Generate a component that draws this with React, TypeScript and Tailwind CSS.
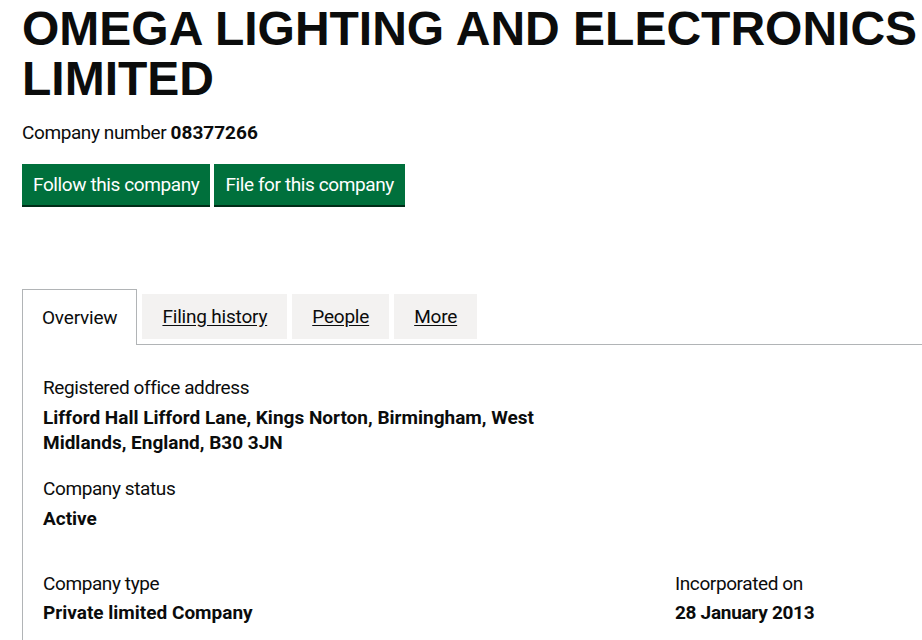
const tabs = ["Filing history", "People", "More"];

const App = () => {
  return (
    <div className="w-[922px] h-[640px] overflow-hidden bg-white text-[#0b0c0c] font-['Roboto',sans-serif] tracking-[-0.4px]">
      <div className="pl-[22px] w-[1400px]">
        <h1 className="pt-[4px] text-[48px] leading-[50px] font-bold tracking-normal font-['Liberation_Sans',Arial,sans-serif]">
          OMEGA LIGHTING AND ELECTRONICS
          <br />
          LIMITED
        </h1>
        <p className="mt-[16px] text-[19px] leading-[25px]">
          Company number <strong className="font-bold tracking-normal">08377266</strong>
        </p>

        <div className="mt-[19px] flex gap-[4px]">
          <button className="bg-[#00703c] text-white text-[19px] leading-[25px] px-[11px] py-[8px] shadow-[0_2px_0_#002d18]">
            Follow this company
          </button>
          <button className="bg-[#00703c] text-white text-[19px] leading-[25px] px-[11px] py-[8px] shadow-[0_2px_0_#002d18]">
            File for this company
          </button>
        </div>

        {/* Tabs */}
        <div className="mt-[84px] flex items-end border-b border-[#b1b4b6] tracking-[-0.2px]">
          <div className="-mb-px h-[56px] border border-b-0 border-[#b1b4b6] bg-white px-[19px] pt-[15px] text-[19px] leading-[25px]">
            Overview
          </div>
          {tabs.map((t) => (
            <a
              key={t}
              href="#"
              className="ml-[5px] mb-[5px] h-[45px] bg-[#f3f2f1] px-[20px] pt-[10px] text-[19px] leading-[25px] underline underline-offset-2"
            >
              {t}
            </a>
          ))}
        </div>

        <div className="border-l border-[#b1b4b6] px-[20px] pt-[30px] pb-[30px] text-[19px] leading-[25px]">
          <dl>
            <dt>Registered office address</dt>
            <dd className="mt-[5px] font-bold tracking-normal w-[500px]">
              Lifford Hall Lifford Lane, Kings Norton, Birmingham, West Midlands, England, B30 3JN
            </dd>
          </dl>
          <dl className="mt-[21px]">
            <dt>Company status</dt>
            <dd className="mt-[5px] font-bold tracking-normal">Active</dd>
          </dl>
          <div className="mt-[40px] grid grid-cols-[632px_1fr]">
            <dl>
              <dt>Company type</dt>
              <dd className="mt-[4px] font-bold tracking-normal">Private limited Company</dd>
            </dl>
            <dl>
              <dt>Incorporated on</dt>
              <dd className="mt-[4px] font-bold tracking-[-0.3px]">28 January 2013</dd>
            </dl>
          </div>
        </div>
      </div>
    </div>
  );
};

export default App;
